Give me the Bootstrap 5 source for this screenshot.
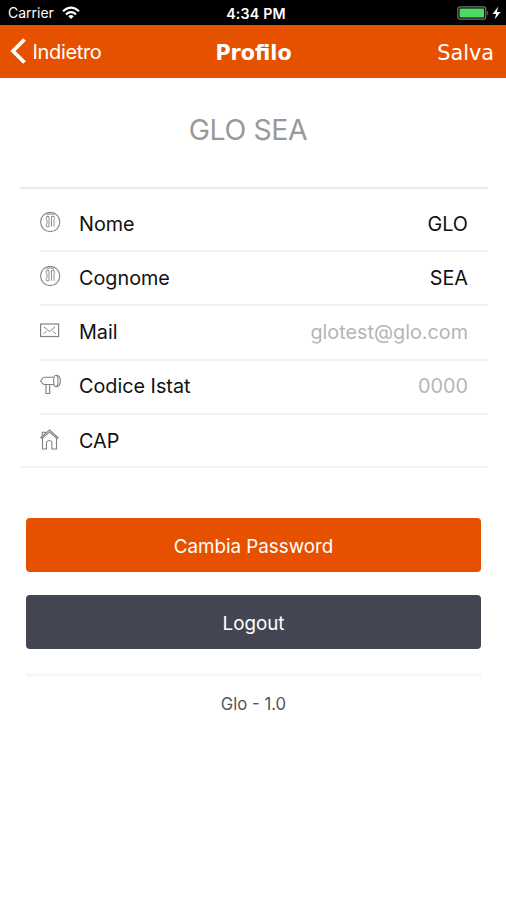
<!DOCTYPE html>
<html lang="it">
<head>
<meta charset="utf-8">
<meta name="viewport" content="width=device-width, initial-scale=1">
<title>Profilo</title>
<link href="https://cdn.jsdelivr.net/npm/bootstrap@5.3.0/dist/css/bootstrap.min.css" rel="stylesheet">
<style>
body{font-family:Inter,"Liberation Sans",sans-serif;background:#fff;color:#111;font-size:19.8px;line-height:1.2;min-height:900px}
svg{display:block;flex:none}
.status-bar{height:25px;background:#000;color:#fff;font-size:14px;display:grid;grid-template-columns:1fr auto 1fr;padding:2px 4px 0 8px}
.status-clock{font-weight:600;letter-spacing:.2px;padding-left:2px;font-size:14.2px}
.top-nav{height:53px;background:#e65100;color:#fff;display:grid;grid-template-columns:1fr auto 1fr;padding:1px 12px 0 10px}
.top-nav a{color:#fff}
.nav-heading{font:bold 20.7px "DejaVu Sans",sans-serif;padding:2px 0 0 3px}
.save-link{font:20.8px "DejaVu Sans",sans-serif;padding-top:2px}
.back-link{font-size:20px;letter-spacing:-.35px}
.back-link svg{margin-top:-2px}
.back-link span{margin:-1px 0 0 -.5px}
.user-title{font-size:28.5px;color:#999;padding-top:35px;height:109px;padding-right:10px;letter-spacing:-.4px}
.fields{margin:0 18px 0 20px;border-top:2px solid #ececec;border-bottom:2px solid #f5f5f5;height:281px;padding-top:9px}
.field{height:54.2px;margin-left:20px;padding:1px 20px 0 0;border-bottom:2px solid #f2f2f2}
.field:last-child{border:0}
.field-icon{width:39px;padding-bottom:5px}
.field-icon svg{margin-left:-.5px}
.placeholder-value{color:#b5b5b5}
.actions{margin:50px 25px 0 26px}
.action-btn{height:54px;font-size:18.8px;border:0;border-radius:4px;color:#fff;padding-top:10px}
.btn-change,.btn-change:hover{background:#e65100;color:#fff}
.btn-exit,.btn-exit:hover{background:#434652;color:#fff}
.action-list{gap:23px}
.rule{height:4px;background:#f7f7f7;margin-top:24px}
.version{font-size:16.7px;color:#555;padding-top:17px}
</style>
<script src="https://cdn.jsdelivr.net/npm/bootstrap@5.3.0/dist/js/bootstrap.bundle.min.js"></script>
</head>
<body>
<header>
  <div class="status-bar align-items-center">
    <div class="d-flex align-items-center">
      <span class="status-carrier">Carrier</span>
      <svg class="ms-2" width="18" height="15" viewBox="0 0 18 15" fill="none" stroke="#fff" stroke-width="2.2"><path d="M1 5.2Q9-1.9 17 5.2M4 8.3Q9 4 14 8.3"/><path d="M6.3 10.2Q9 8 11.7 10.2L9 13Z" fill="#fff" stroke="none"/></svg>
    </div>
    <span class="status-clock">4:34 PM</span>
    <div class="d-flex align-items-center justify-content-end">
      <svg width="45" height="18" viewBox="0 0 45 18"><rect x=".8" y="1.800" width="28" height="12.4" rx="2.5" fill="none" stroke="#777" stroke-width="1.2"/><rect x="2.5" y="3.5" width="24.6" height="9" rx="1" fill="#4cd964"/><path d="M30.2 5.5q2 2.5 0 5z" fill="#777"/><path d="M41.3 1.500 35.5 9h3.7l-1.6 5.6L43.6 7h-3.800z" fill="#fff"/></svg>
    </div>
  </div>
  <nav class="top-nav align-items-center">
    <a class="back-link d-flex align-items-center text-decoration-none" href="#">
      <svg width="23" height="28" viewBox="0 0 23 28"><path d="M14.500 2.500 3 14l11.500 11.500" fill="none" stroke="#fff" stroke-width="3.800"/></svg>
      <span>Indietro</span>
    </a>
    <h1 class="nav-heading m-0">Profilo</h1>
    <a class="save-link text-end text-decoration-none" href="#">Salva</a>
  </nav>
</header>
<main>
  <h2 class="user-title text-center fw-normal m-0">GLO SEA</h2>
  <div class="fields">
    <div class="field d-flex align-items-center">
      <div class="field-icon"><svg width="21" height="22" viewBox="0 0 21 22" fill="none" stroke="#858585"><circle cx="10.200" cy="11" r="9.600" stroke-width="1.1"/><path d="M6.500 4q3.700-2.300 7.500 0M6.500 5.500H9v10.200H6.500q-1.200-1 .5-3V9q-1.500-1.500-.5-3.500M11.500 15.700V5.500H14q1 2 0 3.500v6.700" stroke-width=".9"/></svg></div>
      <span>Nome</span><span class="ms-auto">GLO</span>
    </div>
    <div class="field d-flex align-items-center">
      <div class="field-icon"><svg width="21" height="22" viewBox="0 0 21 22" fill="none" stroke="#858585"><circle cx="10.200" cy="11" r="9.600" stroke-width="1.1"/><path d="M6.500 4q3.700-2.300 7.500 0M6.500 5.500H9v10.200H6.500q-1.200-1 .5-3V9q-1.500-1.500-.5-3.500M11.500 15.700V5.500H14q1 2 0 3.500v6.700" stroke-width=".9"/></svg></div>
      <span>Cognome</span><span class="ms-auto">SEA</span>
    </div>
    <div class="field d-flex align-items-center">
      <div class="field-icon"><svg width="20" height="18" viewBox="0 0 20 18" fill="none" stroke="#808080"><rect x=".6" y="3" width="18" height="12.500" stroke-width="1.2"/><path d="m4 6 5.500 4.500L15 6M3.500 13l3-3M15.800 13l-3-3" stroke-width="1"/></svg></div>
      <span>Mail</span><span class="placeholder-value ms-auto">glotest@glo.com</span>
    </div>
    <div class="field d-flex align-items-center">
      <div class="field-icon"><svg width="22" height="22" viewBox="0 0 22 22" fill="none" stroke="#808080" stroke-width="1.1"><path d="M14 3.200H5Q3.500 3 2.500 4.500L.700 7l1.700 2.300q1 1.200 2.500 1.200H14M6 10.500v9h3.700v-9"/><ellipse cx="15.800" cy="7" rx="2.200" ry="5.800"/><path d="M16.200 1.200q4.200 .3 4.200 5.800t-4.200 5.800"/></svg></div>
      <span>Codice Istat</span><span class="placeholder-value ms-auto">0000</span>
    </div>
    <div class="field d-flex align-items-center">
      <div class="field-icon"><svg width="20" height="22" viewBox="0 0 20 22" fill="none" stroke="#808080" stroke-width="1.1"><path d="M2.500 9.500v10.500h4v-7q2.700-3 5.400 0v7h4.600V9.500M.800 8.500 9.500 1l8.500 7.500-1 1-7.500-6.300-7.500 6.300zM2.200 7V3.300h3v1.500"/></svg></div>
      <span>CAP</span>
    </div>
  </div>
  <div class="actions">
    <div class="d-grid action-list">
      <button class="btn action-btn btn-change" type="button">Cambia Password</button>
      <button class="btn action-btn btn-exit" type="button">Logout</button>
    </div>
    <div class="rule"></div>
    <p class="version text-center m-0">Glo - 1.0</p>
  </div>
</main>
</body>
</html>
